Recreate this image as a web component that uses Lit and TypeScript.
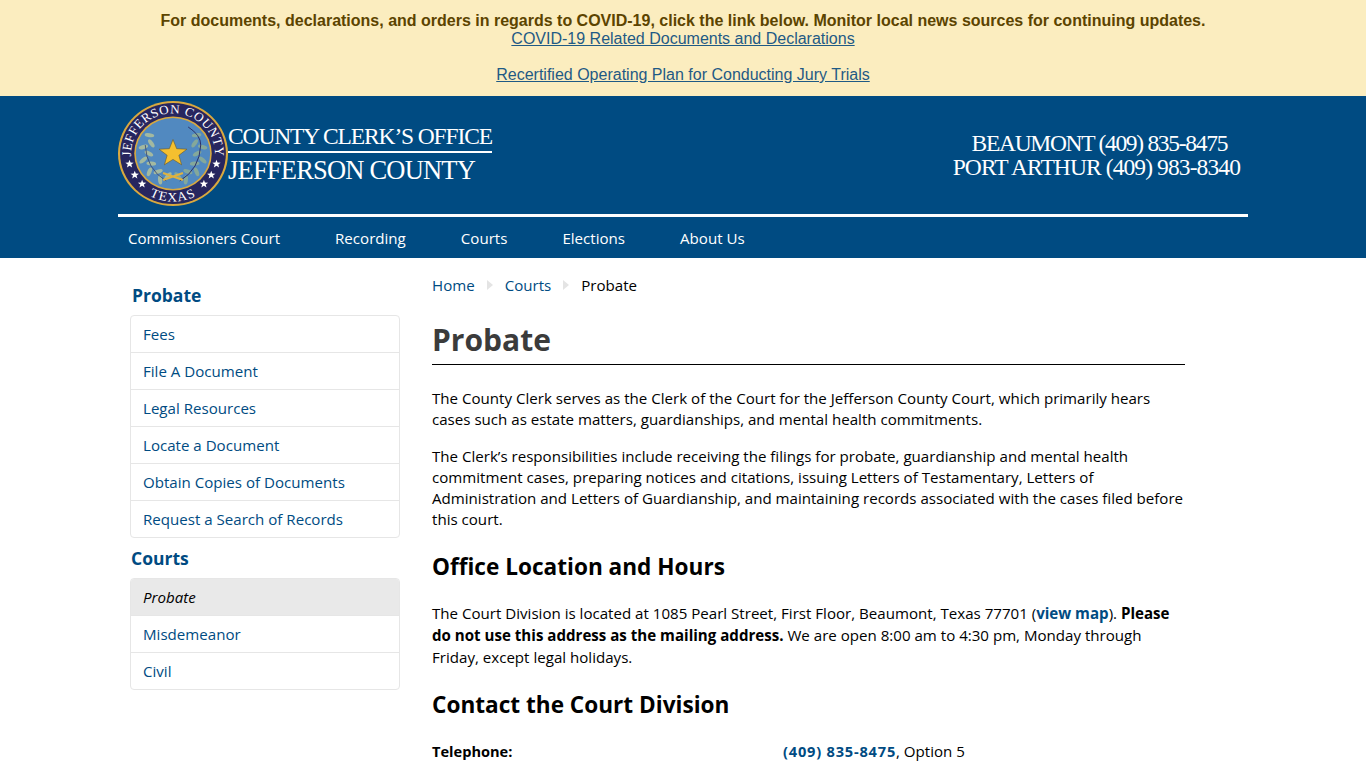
import {LitElement, css, html, svg} from 'lit';
import {customElement} from 'lit/decorators.js';

const sideProbate = ['Fees', 'File A Document', 'Legal Resources', 'Locate a Document', 'Obtain Copies of Documents', 'Request a Search of Records'];
const navLinks = ['Commissioners Court', 'Recording', 'Courts', 'Elections', 'About Us'];

const star = (x: number, y: number, r: number, fill: string, stroke = 'none') => {
    const pts = [];
    for (let i = 0; i < 10; i++) {
        const rad = i % 2 ? r * 0.42 : r;
        const a = (Math.PI / 5) * i - Math.PI / 2;
        pts.push(`${(x + rad * Math.cos(a)).toFixed(1)},${(y + rad * Math.sin(a)).toFixed(1)}`);
    }
    return svg`<polygon points=${pts.join(' ')} fill=${fill} stroke=${stroke} stroke-width="0.6"></polygon>`;
};

// one wreath branch, side -1 is the left one and 1 the right one
const branch = (side: number, color: string) => {
    const out = [];
    for (let i = 0; i < 10; i++) {
        const deg = 168 - i * 13;
        const a = (Math.PI / 180) * deg;
        const off = i % 2 ? 3 : -3;
        const r = 26 + off;
        const x = 55.5 + side * r * Math.sin(a);
        const y = 52.5 - r * Math.cos(a);
        const rot = side * (deg + 90 + off * 10);
        out.push(svg`<ellipse cx=${x.toFixed(1)} cy=${y.toFixed(1)} rx="4.6" ry="2" fill=${color} transform="rotate(${rot} ${x.toFixed(1)} ${y.toFixed(1)})"></ellipse>`);
    }
    return out;
};

@customElement('app-root')
export class AppRoot extends LitElement {
    static styles = css`
        :host {
            display: block;
            height: 768px;
            overflow: hidden;
            font-family: "Open Sans", sans-serif;
            font-size: 15.1px;
            color: #000;
            background: #fff;
        }

        a {
            color: #004b82;
            text-decoration: none;
        }

        .notice {
            height: 96px;
            box-sizing: border-box;
            padding-top: 12px;
            background: #fbedbf;
            text-align: center;
            font-family: "Liberation Sans", Arial, sans-serif;
            font-size: 16px;
            line-height: 18px;
            color: #5c4400;
        }

        .notice strong {
            display: block;
        }

        .notice a {
            display: block;
            color: #1f5a85;
            text-decoration: underline;
        }

        .notice a + a {
            margin-top: 18px;
        }

        .banner {
            height: 162px;
            background: #004b82;
        }

        .banner-inner {
            width: 1130px;
            margin-left: 118px;
        }

        .brand {
            height: 121px;
            box-sizing: border-box;
            padding-top: 5px;
            display: flex;
            justify-content: space-between;
            border-bottom: 3px solid #fff;
        }

        .logo {
            display: flex;
        }

        .seal {
            width: 110px;
            height: 105px;
            display: block;
        }

        .titles {
            padding-top: 22px;
            font-family: "Liberation Serif", serif;
            color: #fff;
            text-transform: uppercase;
        }

        .title-a {
            width: 264px;
            height: 28px;
            font-size: 23.5px;
            line-height: 27px;
            letter-spacing: -1.13px;
            border-bottom: 2px solid #fff;
            white-space: nowrap;
        }

        .title-b {
            font-size: 26.5px;
            line-height: 35px;
            letter-spacing: -0.8px;
            white-space: nowrap;
        }

        .phones {
            padding: 30px 8px 0 0;
            font-family: "Liberation Serif", serif;
            font-size: 23.5px;
            line-height: 24px;
            letter-spacing: -0.9px;
            color: #fff;
            text-align: center;
            text-transform: uppercase;
        }

        .phones .tight {
            padding-left: 6px;
            letter-spacing: -1.3px;
        }

        .nav {
            display: flex;
            height: 41px;
            align-items: center;
            padding-left: 10px;
            gap: 55px;
        }

        .nav a {
            color: #fff;
        }

        .page {
            display: flex;
            padding-left: 130px;
        }

        .side {
            width: 270px;
            margin-right: 32px;
            padding-top: 25px;
        }

        .side h3 {
            margin: 0 0 7px 2px;
            font-size: 17.5px;
            line-height: 25px;
            font-weight: 700;
            color: #004b82;
        }

        .side h3.next {
            margin: 8px 0 7px 1px;
        }

        .list {
            border: 1px solid #e6e6e6;
            border-radius: 4px;
            overflow: hidden;
        }

        .list a,
        .list span {
            display: block;
            height: 36px;
            line-height: 37px;
            padding-left: 12px;
            border-top: 1px solid #e6e6e6;
        }

        .list > :first-child {
            border-top: 0;
        }

        .list .current {
            background: #e9e9e9;
            font-style: italic;
        }

        .main {
            width: 753px;
            padding-top: 16px;
        }

        .crumbs {
            display: flex;
            align-items: center;
            height: 22px;
        }

        .sep {
            width: 0;
            height: 0;
            margin: 0 12px;
            border-left: 6px solid #e4e4e4;
            border-top: 5px solid transparent;
            border-bottom: 5px solid transparent;
        }

        h1 {
            margin: 23px 0 23px;
            padding-bottom: 3px;
            border-bottom: 1px solid #000;
            font-size: 30px;
            line-height: 42px;
            font-weight: 700;
            color: #3b3b3b;
        }

        p {
            margin: 0 0 16px;
            line-height: 21px;
        }

        p.hours {
            margin: -1px 0 15px;
            line-height: 22px;
        }

        h2 {
            margin: 22px 0 21px;
            font-size: 22.6px;
            line-height: 30px;
            font-weight: 700;
        }

        .contact {
            display: grid;
            grid-template-columns: 351px 1fr;
            line-height: 21px;
        }

        .contact b {
            font-size: 14.6px;
        }

        .phone {
            letter-spacing: 0.8px;
        }
    `;

    renderSeal() {
        return html`<svg class="seal" viewBox="3 0 105 105" preserveAspectRatio="none" role="img" aria-label="Jefferson County seal">
            <defs>
                <path id="arcTop" d="M 24.9 78.2 A 40 40 0 1 1 86.1 78.2"></path>
                <path id="arcBottom" d="M 13.9 76.5 A 48 48 0 0 0 97.1 76.5"></path>
            </defs>
            <circle cx="55.5" cy="52.5" r="52.5" fill="#d9a93f"></circle>
            <circle cx="55.5" cy="52.5" r="50.5" fill="#27265f"></circle>
            <circle cx="55.5" cy="52.5" r="37" fill="#d9a93f"></circle>
            <circle cx="55.5" cy="52.5" r="35.5" fill="#5189c0"></circle>
            <text font-family="Liberation Serif, serif" font-size="12.6" fill="#fff" letter-spacing="0.5">
                <textPath href="#arcTop" startOffset="50%" text-anchor="middle">JEFFERSON COUNTY</textPath>
            </text>
            <text font-family="Liberation Serif, serif" font-size="13" fill="#fff" letter-spacing="1">
                <textPath href="#arcBottom" startOffset="50%" text-anchor="middle">TEXAS</textPath>
            </text>
            ${branch(-1, '#a3b9a0')}
            ${branch(1, '#84a89a')}
            <path d="M49 80 Q30 68 29 44" fill="none" stroke="#39456a" stroke-width="0.8"></path>
            <path d="M62 80 Q81 68 82 44 Q82 34 70 26" fill="none" stroke="#27265f" stroke-width="0.9"></path>
            <path d="M46 79 L65 72 M46 72 L65 79" stroke="#e0b23f" stroke-width="2"></path>
            ${star(55.5, 52.5, 14, '#f4c02f', '#6a5a2a')}
            ${star(14, 63, 4.2, '#fff')}${star(97, 63, 4.2, '#fff')}
            ${star(19, 74, 4.2, '#fff')}${star(92, 74, 4.2, '#fff')}
            ${star(26, 83, 4.2, '#fff')}${star(85, 83, 4.2, '#fff')}
        </svg>`;
    }

    render() {
        return html`
            <div class="notice">
                <strong>For documents, declarations, and orders in regards to COVID-19, click the link below. Monitor local news sources for continuing updates.</strong>
                <a href="#">COVID-19 Related Documents and Declarations</a>
                <a href="#">Recertified Operating Plan for Conducting Jury Trials</a>
            </div>
            <header class="banner">
                <div class="banner-inner">
                    <div class="brand">
                        <div class="logo">
                            ${this.renderSeal()}
                            <div class="titles">
                                <div class="title-a">County Clerk’s Office</div>
                                <div class="title-b">Jefferson County</div>
                            </div>
                        </div>
                        <div class="phones">
                            <div class="tight">Beaumont (409) 835-8475</div>
                            <div>Port Arthur (409) 983-8340</div>
                        </div>
                    </div>
                    <nav class="nav">${navLinks.map((n) => html`<a href="#">${n}</a>`)}</nav>
                </div>
            </header>
            <div class="page">
                <aside class="side">
                    <h3>Probate</h3>
                    <div class="list">${sideProbate.map((s) => html`<a href="#">${s}</a>`)}</div>
                    <h3 class="next">Courts</h3>
                    <div class="list">
                        <span class="current">Probate</span>
                        <a href="#">Misdemeanor</a>
                        <a href="#">Civil</a>
                    </div>
                </aside>
                <main class="main">
                    <div class="crumbs">
                        <a href="#">Home</a><i class="sep"></i>
                        <a href="#">Courts</a><i class="sep"></i>
                        <span>Probate</span>
                    </div>
                    <h1>Probate</h1>
                    <p>The County Clerk serves as the Clerk of the Court for the Jefferson County Court, which primarily hears cases such as estate matters, guardianships, and mental health commitments.</p>
                    <p>The Clerk’s responsibilities include receiving the filings for probate, guardianship and mental health commitment cases, preparing notices and citations, issuing Letters of Testamentary, Letters of Administration and Letters of Guardianship, and maintaining records associated with the cases filed before this court.</p>
                    <h2>Office Location and Hours</h2>
                    <p class="hours">The Court Division is located at 1085 Pearl Street, First Floor, Beaumont, Texas 77701 (<a href="#"><b>view map</b></a>). <b>Please do not use this address as the mailing address.</b> We are open 8:00 am to 4:30 pm, Monday through Friday, except legal holidays.</p>
                    <h2>Contact the Court Division</h2>
                    <div class="contact">
                        <b>Telephone:</b>
                        <span><a href="#"><b class="phone">(409) 835-8475</b></a>, Option 5</span>
                    </div>
                </main>
            </div>
        `;
    }
}
